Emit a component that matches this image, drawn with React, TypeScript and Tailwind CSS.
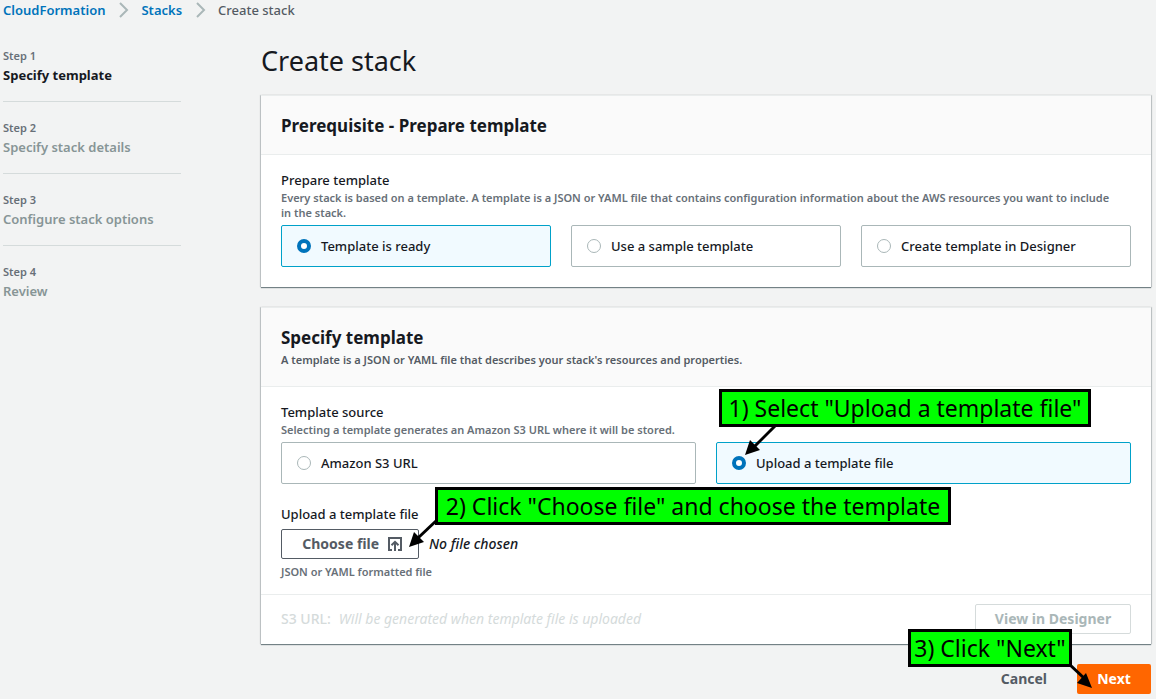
import { useRef, useState, type ReactNode } from "react";

const steps = [
  { label: "Step 1", title: "Specify template" },
  { label: "Step 2", title: "Specify stack details" },
  { label: "Step 3", title: "Configure stack options" },
  { label: "Step 4", title: "Review" },
];

function Chevron() {
  return (
    <svg className="mx-2.5 size-4 shrink-0" viewBox="0 0 16 16" fill="none" stroke="#aab7b8" strokeWidth="2" aria-hidden="true">
      <path d="M5 1l7 7-7 7" />
    </svg>
  );
}

function UploadIcon() {
  return (
    <svg className="size-4" viewBox="0 0 16 16" fill="none" stroke="currentColor" strokeWidth="2" aria-hidden="true">
      <path d="M5 14H2V2h12v12h-3" />
      <path d="M8 15V6M4.5 9.3L8 5.8l3.5 3.5" />
    </svg>
  );
}

type TileProps = {
  name: string;
  label: string;
  checked: boolean;
  onSelect: () => void;
  children?: ReactNode;
};

function Tile({ name, label, checked, onSelect, children }: TileProps) {
  return (
    <div className="relative flex-1">
      <label
        className={
          checked
            ? "flex h-[42px] items-center gap-2.5 rounded-xs border border-[#00a1c9] bg-[#f1faff] px-[15px]"
            : "flex h-[42px] items-center gap-2.5 rounded-xs border border-[#aab7b8] bg-white px-[15px]"
        }
      >
        <input
          type="radio"
          name={name}
          checked={checked}
          onChange={onSelect}
          className="size-3.5 shrink-0 appearance-none rounded-full border border-[#aab7b8] bg-white checked:border-4 checked:border-[#0073bb]"
        />
        <span className="text-[13px] leading-5 font-medium">{label}</span>
      </label>
      {children}
    </div>
  );
}

function Card({ title, description, children }: { title: string; description?: string; children: ReactNode }) {
  return (
    <section className="border-t border-[#eaeded] bg-white shadow-[0_1px_1px_0_rgba(0,28,36,0.5),1px_0_1px_0_rgba(0,28,36,0.15),-1px_0_1px_0_rgba(0,28,36,0.15)]">
      <header className={description ? "border-b border-[#eaeded] bg-[#fafafa] px-5 pt-[19px] pb-4" : "border-b border-[#eaeded] bg-[#fafafa] px-5 pt-[19px] pb-[17px]"}>
        <h2 className="text-[17px] leading-[22px] font-bold">{title}</h2>
        {description && <p className="pt-px text-[11px] leading-5 font-semibold text-[#545b64]">{description}</p>}
      </header>
      {children}
    </section>
  );
}

const callout =
  "absolute z-10 flex h-[38px] items-center justify-center border-3 border-black bg-[#00ff00] text-[23px] whitespace-nowrap text-black";

export default function App() {
  const [prepare, setPrepare] = useState("Template is ready");
  const [source, setSource] = useState("Upload a template file");
  const [fileName, setFileName] = useState("");
  const fileInput = useRef<HTMLInputElement>(null);

  return (
    <div className="min-h-screen bg-[#f2f3f3] pr-[5px] pb-[5px] pl-[3px] font-['Noto_Sans',sans-serif] text-sm leading-5 text-[#16191f]">
      <nav aria-label="Breadcrumb" className="flex items-center text-[13px] leading-5">
        <a href="#cloudformation" className="font-semibold text-[#0073bb]">CloudFormation</a>
        <Chevron />
        <a href="#stacks" className="font-semibold text-[#0073bb]">Stacks</a>
        <Chevron />
        <span className="font-medium text-[#545b64]">Create stack</span>
      </nav>

      <div className="flex gap-20 pt-[26px]">
        <ol className="w-[178px] shrink-0">
          {steps.map((step, i) => (
            <li key={step.label} className={i < 3 ? "mb-4 border-b border-[#d5dbdb] pb-4" : ""}>
              <p className="text-[11px] leading-5 font-semibold text-[#687078]">{step.label}</p>
              <p className={i === 0 ? "text-[13px] leading-[19px] font-bold" : "text-[13px] leading-[19px] font-semibold text-[#879596]"}>{step.title}</p>
            </li>
          ))}
        </ol>

        <main className="min-w-0 flex-1">
          <h1 className="mb-[19px] text-[27px] leading-[30px]">Create stack</h1>

          <div className="flex flex-col gap-5">
            <Card title="Prerequisite - Prepare template">
              <div className="px-5 pt-[15px] pb-5">
                <p className="text-[13px] leading-5 font-medium">Prepare template</p>
                <p className="mb-[5px] pr-3 text-[11px] leading-[15px] font-semibold text-[#687078]">
                  Every stack is based on a template. A template is a JSON or YAML file that contains configuration
                  information about the AWS resources you want to include in the stack.
                </p>
                <div className="flex gap-5">
                  {["Template is ready", "Use a sample template", "Create template in Designer"].map((label) => (
                    <Tile
                      key={label}
                      name="prepare"
                      label={label}
                      checked={prepare === label}
                      onSelect={() => setPrepare(label)}
                    />
                  ))}
                </div>
              </div>
            </Card>

            <Card
              title="Specify template"
              description="A template is a JSON or YAML file that describes your stack's resources and properties."
            >
              <div className="px-5 pt-[15px] pb-[15px]">
                <p className="text-[13px] leading-5 font-medium">Template source</p>
                <p className="mb-[5px] text-[11px] leading-[15px] font-semibold text-[#687078]">
                  Selecting a template generates an Amazon S3 URL where it will be stored.
                </p>
                <div className="flex gap-5">
                  <Tile
                    name="source"
                    label="Amazon S3 URL"
                    checked={source === "Amazon S3 URL"}
                    onSelect={() => setSource("Amazon S3 URL")}
                  />
                  <Tile
                    name="source"
                    label="Upload a template file"
                    checked={source === "Upload a template file"}
                    onSelect={() => setSource("Upload a template file")}
                  >
                    <svg className="pointer-events-none absolute -top-5 left-6 z-10 h-9 w-10" viewBox="0 0 40 36" aria-hidden="true">
                      <path d="M36 3L14 25" stroke="black" strokeWidth="3" />
                      <path d="M5 33l5-15 10 10z" />
                    </svg>
                    <div className={`${callout} -top-[53px] left-[3px] w-[372px]`}>1) Select "Upload a template file"</div>
                  </Tile>
                </div>

                <label htmlFor="template-file" className="mt-5 mb-[5px] block text-[13px] leading-5 font-medium">
                  Upload a template file
                </label>
                <div className="relative flex items-center gap-2.5">
                  <input
                    ref={fileInput}
                    id="template-file"
                    type="file"
                    className="hidden"
                    onChange={(e) => setFileName(e.target.files?.[0]?.name ?? "")}
                  />
                  <button
                    type="button"
                    onClick={() => fileInput.current?.click()}
                    className="flex h-[30px] w-[138px] items-center justify-end gap-2 rounded-xs border border-[#545b64] bg-white pr-[15px] font-bold text-[#545b64]"
                  >
                    Choose file
                    <UploadIcon />
                  </button>
                  <span className="font-medium italic">{fileName || "No file chosen"}</span>
                  <svg className="pointer-events-none absolute -top-3 left-[124px] z-10 h-9 w-10" viewBox="0 0 40 36" aria-hidden="true">
                    <path d="M32 3L13 21" stroke="black" strokeWidth="3" />
                    <path d="M4 30l5-15 10 10z" />
                  </svg>
                  <div className={`${callout} -top-[42px] left-[154px] w-[516px]`}>
                    2) Click "Choose file" and choose the template
                  </div>
                </div>
                <p className="mt-[5px] text-[11px] leading-[15px] font-semibold text-[#687078]">JSON or YAML formatted file</p>
              </div>

              <footer className="flex items-center justify-between border-t border-[#eaeded] px-5 pt-[9px] pb-2.5 text-[#d5dbdb]">
                <p className="flex gap-2">
                  <span className="font-medium">S3 URL:</span>
                  <span className="italic">Will be generated when template file is uploaded</span>
                </p>
                <button type="button" disabled className="h-[30px] w-[156px] rounded-xs border border-[#d5dbdb] bg-white font-bold text-[#aab7b8]">
                  View in Designer
                </button>
              </footer>
            </Card>
          </div>

          <div className="relative mt-5 flex justify-end gap-2.5">
            <button type="button" className="h-[30px] px-5 font-bold text-[#545b64]">Cancel</button>
            <button type="button" className="h-[30px] w-[74px] rounded-xs bg-[#ff6600] font-bold text-white">Next</button>
            <svg className="pointer-events-none absolute top-0 right-[54px] z-10 h-7 w-8" viewBox="0 0 32 28" aria-hidden="true">
              <path d="M4 0L20 15" stroke="black" strokeWidth="3" />
              <path d="M27 24l-15-5 9-10z" />
            </svg>
            <div className={`${callout} -top-[35px] right-[79px] w-[164px]`}>3) Click "Next"</div>
          </div>
        </main>
      </div>
    </div>
  );
}
